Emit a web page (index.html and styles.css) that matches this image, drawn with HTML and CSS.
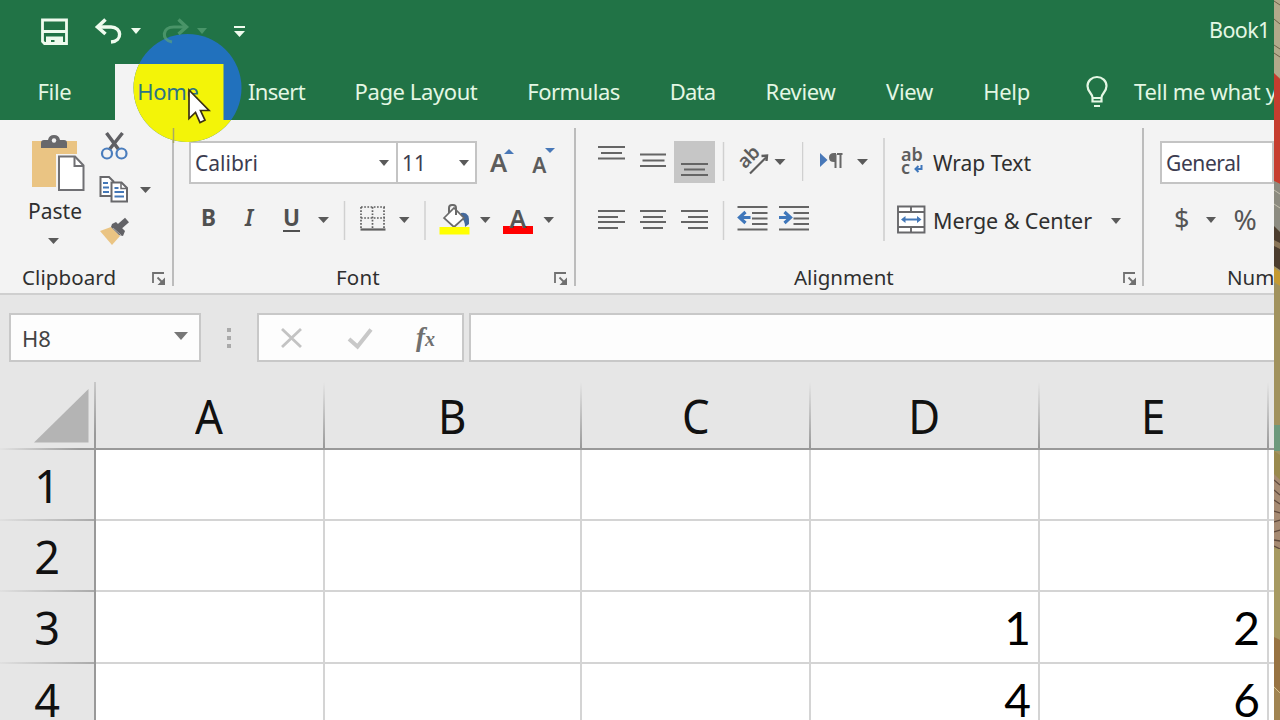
FILE: index.html
```html
<!DOCTYPE html>
<html lang="en">
<head>
<meta charset="utf-8">
<title>Book1</title>
<link rel="stylesheet" href="styles.css">
</head>
<body>
<div class="screen">
<div class="app">
  <header class="titlebar">
    <svg class="ico save" width="56" height="64" viewBox="32 0 56 64"><path d="M42.500 20h24v23.500h-22l-2-2z" fill="none" stroke="#effbee" stroke-width="2.800"/><path d="M43 31.500h23" stroke="#effbee" stroke-width="3"/><path d="M46 44v-7.500h17V44h-8.500v-4H51v4z" fill="#effbee"/></svg>
    <svg class="ico" width="66" height="64" viewBox="88 0 66 64"><path d="M98 27h13c11 0 12 14 0 15" fill="none" stroke="#effbee" stroke-width="3.400"/><path d="M105.500 19.500 97.500 27l8 7" fill="none" stroke="#effbee" stroke-width="3.600"/><path d="M131 28h10l-5 6z" fill="#effbee"/></svg>
    <svg class="ico over" width="66" height="64" viewBox="154 0 66 64"><g opacity=".65"><path d="M186 27h-12c-12 0-13 13-2 15" fill="none" stroke="#5fa67b" stroke-width="3.200"/><path d="m178.500 19.500 8 7.500-8 7" fill="none" stroke="#5fa67b" stroke-width="3.400"/><path d="M197 28h10l-5 6z" fill="#5fa67b"/></g></svg>
    <svg class="ico" width="50" height="64" viewBox="220 0 50 64"><path d="M234 27h11" stroke="#effbee" stroke-width="2"/><path d="M234 31h11l-5.500 6z" fill="#effbee"/></svg>
    <span class="book">Book1</span>
  </header>
  <nav class="tabs">
    <span class="tab t-file">File</span>
    <span class="tab t-home"><b>Home</b></span>
    <span class="tab t-insert">Insert</span>
    <span class="tab t-layout">Page Layout</span>
    <span class="tab t-formulas">Formulas</span>
    <span class="tab t-data">Data</span>
    <span class="tab t-review">Review</span>
    <span class="tab t-view">View</span>
    <span class="tab t-help">Help</span>
    <svg class="ico" width="79" height="56" viewBox="1055 64 79 56"><path d="M1092.500 97.500c0-4-5-5.500-5-11.500a9.500 9 0 0 1 19 0c0 6-5 7.500-5 11.500v4h-9z" fill="none" stroke="#e4f7e4" stroke-width="2.200"/><path d="M1092 98h10M1094 106h6" stroke="#e4f7e4" stroke-width="2"/></svg>
    <span class="tell">Tell me what you want to do</span>
  </nav>

  <section class="ribbon">
    <div class="group g-clip">
      <div class="body">
        <div class="paste">
          <svg class="ico" width="92" height="76" viewBox="0 120 92 76"><path d="M32 141h45v46H32z" fill="#eac483"/><path d="M41 148v-5q0-3 3-3h4q1-5 6-5t6 5h4q3 0 3 3v5z" fill="#68686b"/><circle cx="54" cy="140.500" r="2.200" fill="#f3f3f3"/><path d="M56 154h22v37H56z" fill="#f3f3f3"/><path d="M59 156.500h16l8.500 9V190H59z" fill="#fff" stroke="#707074" stroke-width="2"/><path d="M74.500 157v9h9" fill="none" stroke="#707074" stroke-width="2"/></svg>
          <span>Paste</span>
          <svg class="ico" width="92" height="26" viewBox="0 228 92 26"><path d="M48 238h11l-5.500 6z" fill="#5a5a5a"/></svg>
        </div>
        <div class="stack">
          <svg class="ico" width="78" height="50" viewBox="92 120 78 50"><path d="m106.500 133 12.500 17M122.500 133 109 150" stroke="#5f5f63" stroke-width="3.500" fill="none"/><circle cx="107" cy="153.500" r="5" fill="none" stroke="#4a7dbd" stroke-width="2.200"/><circle cx="121.500" cy="153.500" r="5" fill="none" stroke="#4a7dbd" stroke-width="2.200"/></svg>
          <svg class="ico" width="78" height="42" viewBox="92 170 78 42"><path d="M111 196h-10.500v-19H109l5 5" fill="#fff" stroke="#68686b" stroke-width="2"/><path d="M103 183h5M103 187.500h6M103 192h6" stroke="#4478b8" stroke-width="1.800"/><path d="M111.500 182.500h10l5.500 5.500v13.500h-15.500z" fill="#fff" stroke="#68686b" stroke-width="2"/><path d="M121 183v5.500h6" fill="none" stroke="#68686b" stroke-width="1.500"/><path d="M114.500 188h4M114.500 192h9.500M114.500 196.500h9.500" stroke="#4478b8" stroke-width="1.800"/><path d="M140 187h11l-5.500 6z" fill="#5a5a5a"/></svg>
          <svg class="ico" width="78" height="40" viewBox="92 212 78 40"><path d="m100 231 11-4 9 9-8 9z" fill="#eac483"/><path d="m112 224 4-2 9 9-2 5-4-1-8-8z" fill="#626266"/><path d="m119 227 8-7" stroke="#626266" stroke-width="6"/><path d="m113 228 8 7" stroke="#eee" stroke-width="1" opacity=".5"/></svg>
        </div>
      </div>
      <div class="foot"><span class="l-clip">Clipboard</span><svg class="ico launch" width="16" height="16" viewBox="0 0 16 16"><path d="M2 12V2h11" fill="none" stroke="#707070" stroke-width="1.800"/><path d="M6.500 6.500 12 12" stroke="#707070" stroke-width="1.800"/><path d="M14 6.500V14H6.500z" fill="#707070"/></svg></div>
    </div>

    <div class="group g-font">
      <div class="body rows">
        <div class="row r1">
          <div class="combo c-name"><span>Calibri</span><i class="arr"></i></div>
          <div class="combo c-size"><span>11</span><i class="arr"></i></div>
          <div class="grow"><span class="big">A</span><i class="up"></i></div>
          <div class="shrink"><span>A</span><i class="down"></i></div>
        </div>
        <div class="row r2">
          <span class="bt b">B</span><span class="bt i">I</span><span class="bt u">U</span>
          <svg class="ico" width="100" height="64" viewBox="312 188 100 64"><path d="M318 217h11l-5.500 6z" fill="#5a5a5a"/><path d="M344.500 201v39" stroke="#d0d0d0" stroke-width="1.500"/><path d="M361 207h24M361 218h24M361 207v22M372.500 207v22M384 207v22" stroke="#606060" stroke-width="1.700" stroke-dasharray="1.700 1.500" fill="none"/><path d="M360.500 229.500h25" stroke="#606060" stroke-width="2.200"/><path d="M399 217h10.500l-5.200 6z" fill="#5a5a5a"/></svg>
          <svg class="ico" width="84" height="64" viewBox="412 188 84 64"><path d="M425 201v39" stroke="#d0d0d0" stroke-width="1.500"/><path d="M461 213q9-2 8 11l-4 3q0-7-4-9z" fill="#44699c"/><path d="m444 218 10-10 10 10-10 9z" fill="#fff" stroke="#6a6a6a" stroke-width="1.700"/><path d="M449 213v-5q0-3 3-3h1q3 0 3 3v7" fill="none" stroke="#6a6a6a" stroke-width="2"/><path d="M439.500 227h30v7.500h-30z" fill="#ff0"/><path d="M480 217h10.500l-5.200 6z" fill="#5a5a5a"/></svg>
          <span class="fcolor">A</span>
          <svg class="ico" width="24" height="64" viewBox="536 188 24 64"><path d="M543.500 217H554l-5.200 6z" fill="#5a5a5a"/></svg>
        </div>
      </div>
      <div class="foot"><span class="l-font">Font</span><svg class="ico launch" width="16" height="16" viewBox="0 0 16 16"><path d="M2 12V2h11" fill="none" stroke="#707070" stroke-width="1.800"/><path d="M6.500 6.500 12 12" stroke="#707070" stroke-width="1.800"/><path d="M14 6.500V14H6.500z" fill="#707070"/></svg></div>
    </div>

    <div class="group g-align">
      <div class="body">
        <div class="half">
          <svg class="ico" width="97" height="68" viewBox="577 120 97 68"><path d="M598 147h27M601 153h21M598 158.500h27M640 154.500h26M642.500 160.500h22M640 166h26" stroke="#656565" stroke-width="2"/></svg><svg class="ico" width="41" height="68" viewBox="674 120 41 68"><path d="M674 141h41v42h-41z" fill="#c6c6c6"/><path d="M681 164h27M684 169.500h21M681 175h27" stroke="#656565" stroke-width="2"/></svg><svg class="ico" width="87" height="68" viewBox="715 120 87 68"><path d="M723.500 142v39" stroke="#d0d0d0" stroke-width="1.500"/><text x="0" y="0" transform="translate(745 169.500) rotate(-45)" class="ab">ab</text><path d="m750 173.500 16-16" stroke="#5d5d5d" stroke-width="2.200"/><path d="m761.500 156 5.500-.500-.500 5.500" fill="none" stroke="#5d5d5d" stroke-width="2.400"/><path d="M774.500 159h11l-5.500 6z" fill="#5a5a5a"/></svg><svg class="ico" width="80" height="68" viewBox="802 120 80 68"><path d="M802.500 142v39" stroke="#d0d0d0" stroke-width="1.500"/><path d="m820 153 7.500 7-7.500 7z" fill="#4878b8"/><path d="M837 154h5.500M835.500 154v14M840.500 154v14" stroke="#676767" stroke-width="2"/><path d="M836 153h-2q-5 0-5 4.500t5 4.500h2z" fill="#676767"/><path d="M857 159h11l-5.500 6z" fill="#5a5a5a"/></svg>
          <svg class="ico" width="138" height="64" viewBox="577 188 138 64"><path d="M598 211h27M598 217h20M598 222h27M598 228h20M640 211h26M643 217h20M640 222h26M643 228h20M681 211h27M688 217h20M681 222h27M688 228h20" stroke="#656565" stroke-width="2"/></svg><svg class="ico" width="167" height="64" viewBox="715 188 167 64"><path d="M723.500 201v39" stroke="#d0d0d0" stroke-width="1.500"/><path d="M737.500 207h30M752 213h15.500M752 218.500h15.500M752 224h15.500M737.500 229.500h30M779 207h30M793.500 213h15.500M793.500 218.500h15.500M793.500 224h15.500M779 229.500h30" stroke="#656565" stroke-width="2"/><path d="M750.500 217.500H740M745.500 212l-6 5.500 6 5.500M779 217.500h11M784.500 212l6 5.500-6 5.500" fill="none" stroke="#3f77bb" stroke-width="3.200"/></svg>
        </div>
        <div class="wide">
          <div class="cmd wrap"><svg class="ico" width="50" height="64" viewBox="882 130 50 64"><text x="900" y="160.500" class="abc">ab</text><text x="900" y="173.500" class="abc">c</text><path d="M920.500 165v4h-6m3-3-3 3 3 3" fill="none" stroke="#3f77bb" stroke-width="2"/></svg><span>Wrap Text</span></div>
          <div class="cmd merge"><svg class="ico" width="50" height="64" viewBox="883 188 50 64"><path d="M898 205.500h26.500v26H898zM898 211h26.500M898 226h26.500M911 205v6M911 226v6" fill="#fff" stroke="#68686b" stroke-width="1.900"/><path d="M903 218.500h17" stroke="#4478b8" stroke-width="2"/><path d="m901 218.500 4.500-3.500v7zM921.500 218.500l-4.500-3.500v7z" fill="#4478b8"/></svg><span>Merge &amp; Center</span><i class="arr"></i></div>
        </div>
      </div>
      <div class="foot"><span class="l-align">Alignment</span><svg class="ico launch" width="16" height="16" viewBox="0 0 16 16"><path d="M2 12V2h11" fill="none" stroke="#707070" stroke-width="1.800"/><path d="M6.500 6.500 12 12" stroke="#707070" stroke-width="1.800"/><path d="M14 6.500V14H6.500z" fill="#707070"/></svg></div>
    </div>

    <div class="group g-num">
      <div class="body rows">
        <div class="row r1"><div class="combo c-gen"><span>General</span></div></div>
        <div class="row r2"><span class="dollar">$</span><i class="arr"></i><span class="pct">%</span></div>
      </div>
      <div class="foot"><span class="l-num">Number</span></div>
    </div>
  </section>

  <section class="fbar">
    <div class="box namebox"><span>H8</span><i class="arr"></i></div>
    <div class="dots"><i></i><i></i><i></i></div>
    <div class="box tools">
      <svg class="ico" width="136" height="44" viewBox="260 316 136 44"><path d="m283 329 19 18M302 329l-19 18" stroke="#c3c3c3" stroke-width="2.800"/><path d="m350 339 8.500 7.500L372 329.500" fill="none" stroke="#c8c8c8" stroke-width="4"/></svg>
      <span class="fx">f<small>x</small></span>
    </div>
    <div class="box input"></div>
  </section>

  <main class="sheet">
    <div class="corner"><svg class="ico" width="94" height="66" viewBox="0 382 94 66"><path d="M88.500 389v53.500H34z" fill="#b4b4b4"/></svg></div>
    <div class="ch"><span>A</span></div><div class="ch"><span>B</span></div><div class="ch"><span>C</span></div><div class="ch"><span>D</span></div><div class="ch"><span>E</span></div><div class="ch last"></div>
    <div class="rh">1</div><div class="c"></div><div class="c"></div><div class="c"></div><div class="c"></div><div class="c"></div><div class="c last"></div>
    <div class="rh">2</div><div class="c"></div><div class="c"></div><div class="c"></div><div class="c"></div><div class="c"></div><div class="c last"></div>
    <div class="rh">3</div><div class="c"></div><div class="c"></div><div class="c"></div><div class="c">1</div><div class="c">2</div><div class="c last"></div>
    <div class="rh">4</div><div class="c"></div><div class="c"></div><div class="c"></div><div class="c">4</div><div class="c">6</div><div class="c last"></div>
  </main>
</div>
<svg class="wall" width="6" height="720" viewBox="0 0 6 720">
  <path d="M0 0h6v720H0z" fill="#a39463"/>
  <path d="M0 0h6v78l-6-4z" fill="#b3a98b"/><path d="M0 1l6 4M0 19l6 5M0 45l6 4M0 53l6 4" stroke="#6c6047" stroke-width="1"/>
  <path d="M0 73l6 6v105l-6-3z" fill="#c63d2f"/>
  <path d="M0 181l6 3v48l-6-5z" fill="#8c8b80"/><path d="M0 190l6 4M0 204l6 4" stroke="#c4c0af"/>
  <path d="M0 226l6 6v38l-6-4z" fill="#4b3c2d"/><path d="M0 240l6 3v6l-6-3z" fill="#8a7557"/>
  <path d="M0 268l6 4v14l-6-4z" fill="#c49a32"/>
  <path d="M0 283l6 3v139H0z" fill="#a1925d"/>
  <path d="M0 425h6v26H0z" fill="#6d9a7c"/>
  <path d="M0 451l6 4v25l-6-5z" fill="#9a8a4e"/>
  <path d="M0 474l6 6v69l-6-3z" fill="#a68a72"/><path d="M0 480l6 5M0 490l6 5M0 500l6 4M0 511l6 2M0 522l6-2M0 532l6-2M0 540l6 1M0 546l6 3" stroke="#5f493c" stroke-width="1.300"/>
  <path d="M0 549h6v90l-6-2z" fill="#a79a62"/>
  <path d="M0 637l6 3v80H0z" fill="#987342"/><path d="M0 686l6 6v28H0z" fill="#a18452"/><path d="M0 687l6 6" stroke="#d4bf8b"/>
</svg>
<svg class="spot" width="110" height="110" viewBox="133 33 110 110">
  <defs><clipPath id="tabclip"><path d="M115 64h108.500v56H260v30H100V64z"/></clipPath></defs>
  <circle cx="187.500" cy="88" r="54" fill="#2171bd"/>
  <circle cx="187.500" cy="88" r="54" fill="#f3f408" clip-path="url(#tabclip)"/>
  <path d="M173.500 128v15" stroke="#a9a962" stroke-width="1.500"/>
</svg>
<svg class="cursor" width="26" height="38" viewBox="186 87 26 38"><path d="M189 90v28.500l6.500-6 4.500 10 5-2.300-4.500-9.700h8.500z" fill="#fff" stroke="#3b3013" stroke-width="1.700"/></svg>
</div>
</body>
</html>
```
FILE: styles.css
```css
* { box-sizing: border-box; }
body { margin: 0; overflow: hidden; font-family: "Noto Sans", "Open Sans", sans-serif; color: #2f2f2f; }
.screen { position: relative; display: flex; width: 1280px; height: 720px; overflow: hidden; }
.app { width: 1274px; height: 720px; overflow: hidden; background: #e6e6e6; }
.ico { display: block; flex: none; }
.wall { display: block; flex: none; }
.over { position: relative; z-index: 2; }
.spot { position: absolute; left: 133px; top: 33px; z-index: 1; }
.cursor { position: absolute; left: 186px; top: 87px; z-index: 4; }

.titlebar { display: flex; height: 64px; padding-left: 32px; background: #217346; color: #e4f7e4; }
.book { margin-left: 939px; font-size: 21.5px; line-height: 60px; letter-spacing: -.6px; }

.tabs { display: flex; height: 56px; background: #217346; color: #e4f7e4; font-size: 22px; letter-spacing: -.3px; white-space: nowrap; overflow: hidden; }
.tab { flex: none; text-align: center; line-height: 55px; }
.t-file { width: 115px; padding-right: 6px; }
.t-home { width: 108px; padding-right: 2px; background: #f3f3f3; color: #2c7385; }
.t-home b { position: relative; z-index: 2; font-weight: 400; }
.t-insert { width: 107px; letter-spacing: -.7px; }
.t-layout { width: 172px; letter-spacing: -.4px; }
.t-formulas { width: 143px; letter-spacing: -.5px; }
.t-data { width: 95px; letter-spacing: -.8px; }
.t-review { width: 121px; }
.t-view { width: 97px; }
.t-help { width: 97px; }
.tell { line-height: 55px; }

.ribbon { display: flex; height: 175px; background: #f3f3f3; border-bottom: 2px solid #cfcfcf; font-size: 20.5px; white-space: nowrap; }
.group { position: relative; flex: none; display: flex; flex-direction: column; }
.group::after { content: ""; position: absolute; right: 0; top: 8px; width: 2px; height: 158px; background: #bcbcbc; }
.g-clip { width: 174px; }
.g-font { width: 402px; }
.g-align { width: 568px; }
.g-num { width: 130px; overflow: hidden; }
.g-num::after { display: none; }
.body { display: flex; height: 142px; }
.rows { flex-direction: column; }
.row { display: flex; }
.r1 { height: 68px; padding-top: 21px; }
.r2 { height: 64px; }
.foot { display: flex; align-items: center; height: 31px; line-height: 31px; }
.launch { margin-top: 3px; }
.l-clip { width: 151px; padding-left: 22px; letter-spacing: .1px; }
.l-font { width: 379px; padding-left: 162px; letter-spacing: .2px; }
.l-align { width: 546px; padding-left: 218px; }
.l-num { padding-left: 83px; }
.paste { display: flex; flex-direction: column; width: 92px; }
.paste span { height: 32px; padding-left: 28px; line-height: 31px; font-size: 21px; }
.arr { width: 0; height: 0; border: solid transparent; border-width: 6px 5.500px 0; border-top-color: #5a5a5a; }

.combo { display: flex; align-items: center; justify-content: space-between; height: 43px; border: 2px solid #c4c4c4; background: #fff; color: #3c3c50; font-size: 21px; }
.c-name { width: 209px; margin-left: 15px; padding: 0 7px 0 4px; }
.c-size { width: 81px; margin-left: -2px; padding: 0 6px 0 4px; }
.c-gen { width: 140px; margin-left: 16px; padding-left: 4px; letter-spacing: -.4px; }
.grow, .shrink { display: flex; font-weight: 600; color: #5c5c5c; }
.grow { margin-left: 13px; font-size: 25.5px; line-height: 42px; }
.shrink { margin-left: 18px; font-size: 21px; line-height: 48px; }
.up { width: 0; height: 0; margin: 8px 0 0 -3px; border: solid transparent; border-width: 0 5px 5px; border-bottom-color: #4878b8; }
.down { width: 0; height: 0; margin: 7px 0 0 -1px; border: solid transparent; border-width: 5px 5px 0; border-top-color: #4878b8; }
.bt { font-size: 22.5px; font-weight: 700; line-height: 60px; color: #505050; }
.b { width: 42px; padding-left: 27px; }
.b, .i, .u { flex: none; }
.i { width: 41px; padding-left: 29px; font-style: italic; font-weight: 600; }
.u { width: 55px; padding-left: 26px; text-decoration: underline; text-decoration-thickness: 2px; text-underline-offset: 4px; }
.fcolor { display: block; width: 30px; height: 31px; margin: 15px 3px 0 7px; border-bottom: 8px solid #f00; line-height: 30px; font-size: 25px; font-weight: 600; text-align: center; color: #555; }

.half { display: flex; flex-wrap: wrap; align-content: flex-start; width: 306px; margin-left: 1px; }
.wide { position: relative; width: 259px; }
.wide::before { content: ""; position: absolute; left: 0; top: 18px; width: 1.5px; height: 103px; background: #d6d6d6; }
.ab { font-size: 19px; font-weight: 600; fill: #5d5d5d; }
.abc { font-size: 18px; font-weight: 600; fill: #5d5d5d; }
.cmd { display: flex; align-items: center; height: 64px; }
.wrap { height: 68px; padding-top: 17px; font-size: 21px; }
.wrap .ico { margin-top: -1px; }
.merge { font-size: 21.5px; letter-spacing: -.1px; padding-top: 1px; }
.merge span { width: 162px; }
.merge .arr { margin-left: 16px; }
.dollar { margin-left: 30px; font-size: 27px; line-height: 62px; color: #555; }
.r2 > .arr { margin: 29px 17px 0 17px; }
.pct { font-size: 28px; line-height: 62px; color: #555; }

.fbar { display: flex; height: 87px; padding: 18px 0 0 9px; }
.box { flex: none; display: flex; align-items: center; height: 49px; border: 2px solid #c8c8c8; background: #fdfdfd; }
.namebox { width: 192px; justify-content: space-between; padding: 0 11px; font-size: 22px; color: #444; }
.namebox .arr { margin-top: -4px; border-width: 8px 7px 0; border-top-color: #777; }
.dots { display: flex; flex: none; flex-direction: column; gap: 4px; width: 56px; padding: 15px 0 0 26px; }
.dots i { width: 4px; height: 4px; background: #aaa; }
.tools { width: 207px; }
.dots + .tools { margin-left: 0; }
.fx { margin-left: 21px; font: italic 700 27px/44px "Liberation Serif", serif; color: #707070; }
.fx small { font-size: 20px; }
.input { width: 820px; margin-left: 5px; }

.sheet { display: grid; grid-template-columns: 96px 229px 257px 229px 229px 229px 5px; grid-template-rows: 68px 71px 71px 72px 71px; }
.corner { border-right: 2px solid #999; border-bottom: 2px solid #999; border-image: linear-gradient(135deg, #e6e6e6 40%, #999 90%) 2; }
.ch { border-bottom: 2px solid #999; background: linear-gradient(#e6e6e6, #999) right / 2px 100% no-repeat; padding-right: 2px; text-align: center; font-size: 47px; line-height: 68px; color: #111; }
.ch span { display: inline-block; transform: scaleX(.93); }
.ch.last { background: none; }
.rh { background: linear-gradient(90deg, #e0e0e0, #aaa) bottom / 100% 2px no-repeat; border-right: 2px solid #999; text-align: center; font-size: 45px; line-height: 71px; color: #111; }
.c { padding-right: 7px; border: solid #d4d4d4; border-width: 0 2px 2px 0; background: #fff; font: 46px/71px Lato, sans-serif; text-align: right; color: #000; }
.c.last { border-right: 0; padding: 0; }
```
